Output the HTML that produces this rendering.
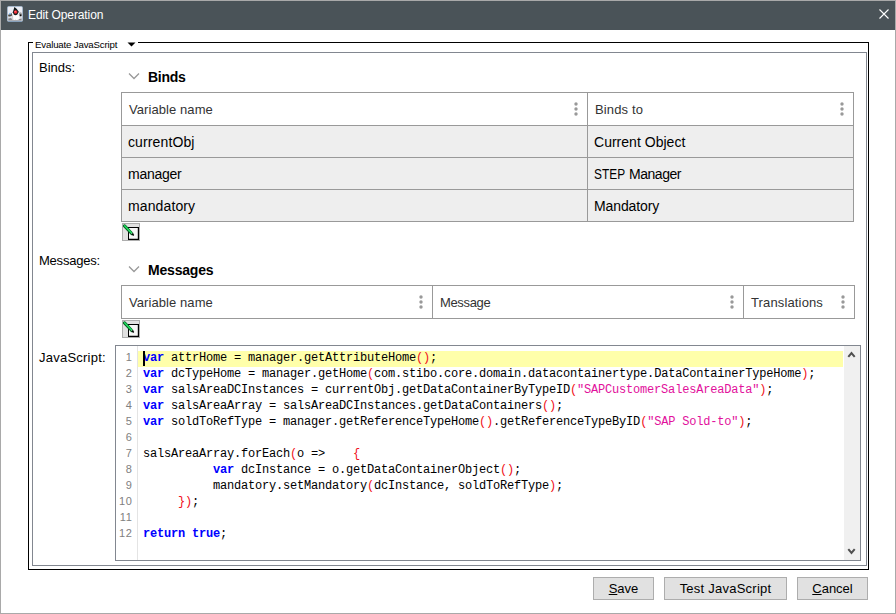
<!DOCTYPE html>
<html>
<head>
<meta charset="utf-8">
<title>Edit Operation</title>
<style>
html,body{margin:0;padding:0;}
body{width:896px;height:614px;overflow:hidden;background:#fff;position:relative;font-family:"Liberation Sans",sans-serif;font-size:13px;color:#000;}
.abs{position:absolute;}
#win{position:absolute;left:0;top:0;width:894px;height:612px;border:1px solid #a9a9a9;border-left-color:#a9a9a9;}
#title{position:absolute;left:1px;top:1px;width:894px;height:29px;background:#4a5358;}
#title .txt{position:absolute;left:27px;top:7px;font-size:12px;line-height:14px;color:#fff;white-space:pre;letter-spacing:-0.1px;}
.lbl{position:absolute;white-space:pre;line-height:16px;font-size:13px;color:#000;}
.sect{position:absolute;white-space:pre;line-height:18px;font-size:14px;font-weight:bold;color:#000;}
.tbl{position:absolute;border:1px solid #999;box-sizing:border-box;background:#fff;}
.hl{position:absolute;height:1px;background:#999;left:0;right:0;}
.vl{position:absolute;width:1px;background:#999;top:0;bottom:0;}
.row{position:absolute;left:0;right:0;height:31px;background:#eee;}
.cell{position:absolute;white-space:pre;font-size:13px;line-height:16px;color:#000;}
.hcell{color:#333;}
.r{font-size:14px;}
.dots{position:absolute;width:4px;height:14px;}
.ibtn{position:absolute;width:18px;height:18px;box-sizing:border-box;border:1px solid #adadad;background:#e1e1e1;}
.btn{position:absolute;top:577px;height:23px;box-sizing:border-box;border:1px solid #adadad;background:#e1e1e1;font-size:13px;line-height:21px;text-align:center;white-space:pre;color:#000;}
.btn u{text-decoration:underline;text-underline-offset:1px;}
#ed{position:absolute;left:115px;top:345px;width:746px;height:216px;box-sizing:border-box;border:1px solid #828790;background:#fff;overflow:hidden;}
#sb{position:absolute;right:0;top:0;width:16px;bottom:0;background:#f0f0f0;}
.ln{position:absolute;left:0;width:16.7px;letter-spacing:0.7px;text-align:right;font-size:11px;line-height:16px;color:#808080;white-space:pre;}
.cl{position:absolute;left:27px;font-family:"Liberation Mono",monospace;font-size:12px;letter-spacing:-0.2px;line-height:16px;white-space:pre;color:#000;}
.k{color:#0000ff;font-weight:bold;}
.s{color:#e2109c;}
.b{color:#f01020;}
</style>
</head>
<body>
<div id="win"></div>
<div id="title">
  <svg class="abs" style="left:6px;top:5px" width="16" height="16" viewBox="0 0 16 16">
    <rect x="0.5" y="0.5" width="15" height="15" rx="1.2" fill="#eceef5" stroke="#a6b8cb"/>
    <rect x="1" y="8.5" width="14" height="6.5" fill="#d9dae0" opacity="0.85"/>
    <path d="M1 15.4 L15 15.4" stroke="#7d98b3" stroke-width="0.9"/>
    <path d="M1.3 12.4 Q4.5 11.6 8.6 13.0 Q11.5 13.8 14.6 12.6 L14.6 14.4 L1.3 14.4 Z" fill="#77777b" opacity="0.85"/>
    <path d="M4.9 7.2 Q8.5 6 12.1 6.9 L12.4 13.0 Q10.6 14.5 8.6 13.7 Q6.6 14.4 4.7 13.1 Z" fill="#fdfdfd"/>
    <path d="M4.8 8.6 L4.7 13.1 Q5.4 13.6 6.3 13.7 L6 8.4 Z" fill="#d0d0d4"/>
    <path d="M7.4 0.9 L5.8 6.2 L6.7 8.6 Q8.6 9.8 10.4 8.4 L11.8 5.8 Q10.2 2.6 7.4 0.9 Z" fill="#121b1c"/>
    <path d="M1.2 8.9 Q2.6 7.0 4.9 7.4 L4.9 9.8 Q3 10.7 1.3 10.2 Z" fill="#4e4a43"/>
    <circle cx="3.0" cy="7.7" r="1.05" fill="#8fc5f5"/>
    <ellipse cx="13.4" cy="8.4" rx="1.6" ry="2.1" fill="#9c9c9e"/>
    <ellipse cx="13.7" cy="9.2" rx="0.8" ry="1.05" fill="#0c0c0c"/>
    <circle cx="8.6" cy="6" r="1.8" fill="#f02a34"/>
    <circle cx="8.3" cy="5.5" r="0.8" fill="#ff6b6e"/>
  </svg>
  <div class="txt">Edit Operation</div>
  <svg class="abs" style="left:877px;top:7px" width="13" height="13" viewBox="0 0 13 13"><path d="M1.5 1.5 L10.5 10.5 M10.5 1.5 L1.5 10.5" stroke="#fff" stroke-width="1.1" fill="none"/></svg>
</div>

<!-- outer black group border -->
<div class="abs" style="left:28px;top:42px;width:841px;height:528px;box-sizing:border-box;border:1px solid #000;"></div>
<div class="abs" style="left:33px;top:40px;width:105px;height:6px;background:#fff;"></div>
<div class="lbl" style="left:35px;top:39px;font-size:9.7px;line-height:12px;letter-spacing:-0.18px;">Evaluate JavaScript</div>
<svg class="abs" style="left:126.7px;top:41.8px" width="10" height="6" viewBox="0 0 10 6"><path d="M0.5 0.5 L8.5 0.5 L4.5 4.5 Z" fill="#000"/></svg>

<!-- inner grey box -->
<div class="abs" style="left:32px;top:52px;width:835px;height:514px;box-sizing:border-box;border:1px solid #828790;"></div>

<!-- Binds -->
<div class="lbl" style="left:39px;top:60px;">Binds:</div>
<svg class="abs" style="left:127px;top:71px" width="14" height="10" viewBox="0 0 14 10"><path d="M2 2.5 L7 7.5 L12 2.5" stroke="#999" stroke-width="1.3" fill="none"/></svg>
<div class="sect" style="left:148px;top:68px;letter-spacing:-0.3px;">Binds</div>

<div class="tbl" style="left:121px;top:92px;width:733px;height:130px;">
  <div class="row" style="top:33px;"></div>
  <div class="row" style="top:65px;"></div>
  <div class="row" style="top:97px;"></div>
  <div class="hl" style="top:32px;"></div>
  <div class="hl" style="top:64px;"></div>
  <div class="hl" style="top:96px;"></div>
  <div class="vl" style="left:465px;"></div>
  <div class="cell hcell" style="left:7px;top:9px;letter-spacing:0.08px;">Variable name</div>
  <div class="cell hcell" style="left:473px;top:9px;letter-spacing:0.15px;">Binds to</div>
  <div class="cell r" style="left:6px;top:41px;letter-spacing:0.12px;">currentObj</div>
  <div class="cell r" style="left:6px;top:73px;letter-spacing:-0.25px;">manager</div>
  <div class="cell r" style="left:6px;top:105px;letter-spacing:0.12px;">mandatory</div>
  <div class="cell r" style="left:472px;top:41px;letter-spacing:0.02px;">Current Object</div>
  <div class="cell r" style="left:472px;top:73px;"><span style="display:inline-block;transform:scaleX(0.85);transform-origin:0 50%;margin-right:-5.5px">STEP</span> <span style="letter-spacing:-0.45px">Manager</span></div>
  <div class="cell r" style="left:472px;top:105px;letter-spacing:-0.1px;">Mandatory</div>
  <svg class="dots" style="left:452px;top:9px" viewBox="0 0 4 14"><circle cx="2" cy="2" r="1.7" fill="#999"/><circle cx="2" cy="7" r="1.7" fill="#999"/><circle cx="2" cy="12" r="1.7" fill="#999"/></svg>
  <svg class="dots" style="left:718px;top:9px" viewBox="0 0 4 14"><circle cx="2" cy="2" r="1.7" fill="#999"/><circle cx="2" cy="7" r="1.7" fill="#999"/><circle cx="2" cy="12" r="1.7" fill="#999"/></svg>
</div>

<div class="ibtn" style="left:122px;top:223px;">
  <svg class="abs" style="left:0;top:0" width="16" height="16" viewBox="0 0 16 16">
    <rect x="5.5" y="3.5" width="10" height="12" fill="#f6f6f6" stroke="#000" stroke-width="1"/>
    <path d="M5.5 15.4 L15.4 15.4 L15.4 3.5" stroke="#000" stroke-width="1.2" fill="none"/>
    <path d="M1.5 1.9 L8.7 9.5" stroke="#075f22" stroke-width="3.2" stroke-linecap="round" fill="none"/>
    <path d="M1.6 1.7 L8.6 9.1" stroke="#1fe060" stroke-width="1.5" stroke-linecap="round" fill="none"/>
    <path d="M8.3 9.6 L9.5 8.5 L10.2 10.6 Z" fill="#fff"/>
    <path d="M9.0 9.6 L10.7 11.6" stroke="#000" stroke-width="1.5" fill="none"/>
  </svg>
</div>

<!-- Messages -->
<div class="lbl" style="left:39px;top:253px;letter-spacing:-0.22px;">Messages:</div>
<svg class="abs" style="left:127px;top:264px" width="14" height="10" viewBox="0 0 14 10"><path d="M2 2.5 L7 7.5 L12 2.5" stroke="#999" stroke-width="1.3" fill="none"/></svg>
<div class="sect" style="left:148px;top:261px;letter-spacing:-0.2px;">Messages</div>

<div class="tbl" style="left:121px;top:285px;width:734px;height:34px;">
  <div class="vl" style="left:310px;"></div>
  <div class="vl" style="left:621px;"></div>
  <div class="cell hcell" style="left:7px;top:9px;letter-spacing:0.08px;">Variable name</div>
  <div class="cell hcell" style="left:318px;top:9px;letter-spacing:-0.35px;">Message</div>
  <div class="cell hcell" style="left:629px;top:9px;letter-spacing:0.14px;">Translations</div>
  <svg class="dots" style="left:297px;top:9px" viewBox="0 0 4 14"><circle cx="2" cy="2" r="1.7" fill="#999"/><circle cx="2" cy="7" r="1.7" fill="#999"/><circle cx="2" cy="12" r="1.7" fill="#999"/></svg>
  <svg class="dots" style="left:608px;top:9px" viewBox="0 0 4 14"><circle cx="2" cy="2" r="1.7" fill="#999"/><circle cx="2" cy="7" r="1.7" fill="#999"/><circle cx="2" cy="12" r="1.7" fill="#999"/></svg>
  <svg class="dots" style="left:719px;top:9px" viewBox="0 0 4 14"><circle cx="2" cy="2" r="1.7" fill="#999"/><circle cx="2" cy="7" r="1.7" fill="#999"/><circle cx="2" cy="12" r="1.7" fill="#999"/></svg>
</div>

<div class="ibtn" style="left:122px;top:320px;">
  <svg class="abs" style="left:0;top:0" width="16" height="16" viewBox="0 0 16 16">
    <rect x="5.5" y="3.5" width="10" height="12" fill="#f6f6f6" stroke="#000" stroke-width="1"/>
    <path d="M5.5 15.4 L15.4 15.4 L15.4 3.5" stroke="#000" stroke-width="1.2" fill="none"/>
    <path d="M1.5 1.9 L8.7 9.5" stroke="#075f22" stroke-width="3.2" stroke-linecap="round" fill="none"/>
    <path d="M1.6 1.7 L8.6 9.1" stroke="#1fe060" stroke-width="1.5" stroke-linecap="round" fill="none"/>
    <path d="M8.3 9.6 L9.5 8.5 L10.2 10.6 Z" fill="#fff"/>
    <path d="M9.0 9.6 L10.7 11.6" stroke="#000" stroke-width="1.5" fill="none"/>
  </svg>
</div>

<!-- JavaScript editor -->
<div class="lbl" style="left:39px;top:350px;letter-spacing:0.23px;">JavaScript:</div>
<div id="ed">
  <div class="abs" style="left:21px;top:0;width:1px;bottom:0;background:#e4e4e4;"></div>
  <div class="abs" style="left:22px;top:5px;width:705px;height:16px;background:#ffffaa;"></div>
  <div id="sb">
    <svg class="abs" style="left:3px;top:4.4px" width="9" height="8" viewBox="0 0 9 8"><path d="M1.3 6.8 L4.5 3.0 L7.7 6.8" stroke="#505050" stroke-width="2" fill="none"/></svg>
    <svg class="abs" style="left:3px;top:202.4px" width="9" height="8" viewBox="0 0 9 8"><path d="M1.3 1.2 L4.5 5.0 L7.7 1.2" stroke="#505050" stroke-width="2" fill="none"/></svg>
  </div>
  <div class="ln" style="top:3px;">1</div>
  <div class="ln" style="top:19px;">2</div>
  <div class="ln" style="top:35px;">3</div>
  <div class="ln" style="top:51px;">4</div>
  <div class="ln" style="top:67px;">5</div>
  <div class="ln" style="top:83px;">6</div>
  <div class="ln" style="top:99px;">7</div>
  <div class="ln" style="top:115px;">8</div>
  <div class="ln" style="top:131px;">9</div>
  <div class="ln" style="top:147px;">10</div>
  <div class="ln" style="top:163px;">11</div>
  <div class="ln" style="top:179px;">12</div>
  <div class="cl" style="top:4px;"><span class="k">var</span> attrHome = manager.getAttributeHome<span class="b">()</span>;</div>
  <div class="cl" style="top:20px;"><span class="k">var</span> dcTypeHome = manager.getHome<span class="b">(</span>com.stibo.core.domain.datacontainertype.DataContainerTypeHome<span class="b">)</span>;</div>
  <div class="cl" style="top:36px;"><span class="k">var</span> salsAreaDCInstances = currentObj.getDataContainerByTypeID<span class="b">(</span><span class="s">"SAPCustomerSalesAreaData"</span><span class="b">)</span>;</div>
  <div class="cl" style="top:52px;"><span class="k">var</span> salsAreaArray = salsAreaDCInstances.getDataContainers<span class="b">()</span>;</div>
  <div class="cl" style="top:68px;"><span class="k">var</span> soldToRefType = manager.getReferenceTypeHome<span class="b">()</span>.getReferenceTypeByID<span class="b">(</span><span class="s">"SAP Sold-to"</span><span class="b">)</span>;</div>
  <div class="cl" style="top:100px;">salsAreaArray.forEach<span class="b">(</span>o =&gt;    <span class="b">{</span></div>
  <div class="cl" style="top:116px;">          <span class="k">var</span> dcInstance = o.getDataContainerObject<span class="b">()</span>;</div>
  <div class="cl" style="top:132px;">          mandatory.setMandatory<span class="b">(</span>dcInstance, soldToRefType<span class="b">)</span>;</div>
  <div class="cl" style="top:148px;">     <span class="b">})</span>;</div>
  <div class="cl" style="top:180px;"><span class="k">return</span> <span class="k">true</span>;</div>
  <div class="abs" style="left:27px;top:5px;width:2px;height:15px;background:#000;"></div>
</div>

<!-- buttons -->
<div class="btn" style="left:593px;width:61px;"><u>S</u>ave</div>
<div class="btn" style="left:664px;width:123px;letter-spacing:0.24px;">Test JavaScript</div>
<div class="btn" style="left:797px;width:71px;"><u>C</u>ancel</div>
</body>
</html>
